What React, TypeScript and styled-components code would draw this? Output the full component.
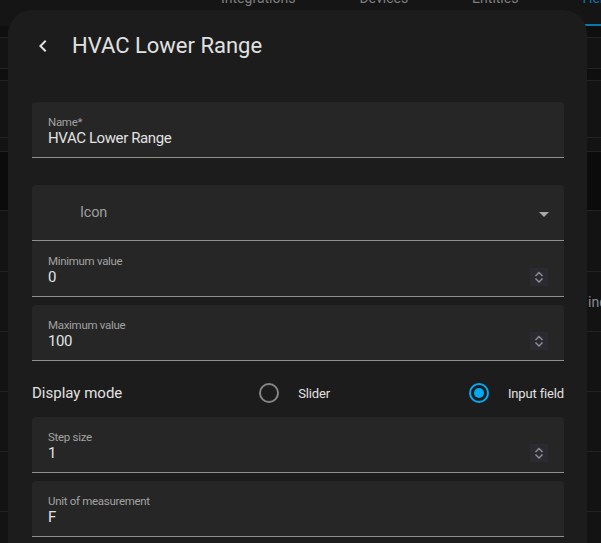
import React from "react";
import styled, { createGlobalStyle } from "styled-components";

const GlobalStyle = createGlobalStyle`
  html, body { margin: 0; padding: 0; background: #121212; }
  body { font-family: Roboto, "Noto Sans", Arial, sans-serif; }
  * { box-sizing: border-box; }
`;

const Page = styled.div`
  position: relative;
  width: 601px;
  height: 543px;
  overflow: hidden;
  background: #121212;
`;

const TabBar = styled.div`
  display: flex;
  align-items: flex-end;
  height: 26px;
  padding-left: 189px;
  background: #151515;
`;

const Tab = styled.div<{ $active?: boolean }>`
  padding: 0 32px 16px;
  font-size: 14px;
  line-height: 20px;
  white-space: nowrap;
  color: ${(p) => (p.$active ? "#0a77ad" : "#7e7e7e")};
  border-bottom: 2px solid ${(p) => (p.$active ? "#0a77ad" : "transparent")};
`;

const BgRow = styled.div<{ $h: number; $tone: "deep" | "dark" | "base" }>`
  display: grid;
  grid-template-columns: 588px 1fr;
  align-items: center;
  height: ${(p) => p.$h}px;
  border-bottom: 1px solid #232323;
  background: ${(p) =>
    p.$tone === "deep" ? "#0b0b0b" : p.$tone === "dark" ? "#0f0f0f" : "#131313"};
`;

const BgCell = styled.span`
  grid-column: 2;
  font-size: 14px;
  color: #8a8a8a;
  white-space: nowrap;
`;

const Dialog = styled.div`
  position: absolute;
  left: 8px;
  top: 10px;
  width: 579px;
  height: 560px;
  background: #1c1c1c;
  border-radius: 24px;
  overflow: hidden;
`;

const Header = styled.header`
  display: flex;
  align-items: center;
  height: 72px;
  padding-left: 23px;
`;

const BackButton = styled.button`
  display: flex;
  width: 24px;
  height: 24px;
  padding: 0;
  margin-right: 17px;
  border: 0;
  background: none;
  color: #e1e1e1;
`;

const Title = styled.h2`
  margin: 0;
  font-size: 22px;
  line-height: 24px;
  font-weight: 400;
  color: #e1e1e1;
`;

const Content = styled.div`
  display: flex;
  flex-direction: column;
  padding: 20px 23px 0 24px;
`;

const Field = styled.div<{ $top?: number; $center?: boolean }>`
  display: flex;
  align-items: ${(p) => (p.$center ? "center" : "flex-start")};
  height: 56px;
  margin-top: ${(p) => p.$top ?? 0}px;
  padding: 0 16px;
  background: #262626;
  border-radius: 4px 4px 0 0;
  border-bottom: 1px solid #8f8f8f;
`;

const FieldText = styled.div`
  display: flex;
  flex-direction: column;
  padding-top: 14px;
`;

const Label = styled.span`
  font-size: 11.5px;
  line-height: 13px;
  letter-spacing: -0.3px;
  color: #a2a2a2;
`;

const Value = styled.span`
  font-size: 15px;
  line-height: 19px;
  letter-spacing: -0.4px;
  color: #e1e1e1;
`;

const Placeholder = styled.span`
  padding-left: 32px;
  font-size: 14.5px;
  letter-spacing: -0.2px;
  color: #9e9e9e;
`;

const ArrowIcon = styled.svg`
  width: 24px;
  height: 24px;
  margin: 3px -8px 0 auto;
  fill: #a8a8a8;
`;

const Spinner = styled.svg`
  width: 18px;
  height: 18px;
  margin: 27px 0 0 auto;
  flex: none;
`;

const ModeRow = styled.div`
  display: flex;
  align-items: center;
  height: 56px;
  padding-top: 8px;
`;

const ModeLabel = styled.span`
  flex: 1;
  font-size: 15px;
  color: #e1e1e1;
`;

const Option = styled.label<{ $gap?: number }>`
  display: flex;
  align-items: center;
  margin-left: ${(p) => p.$gap ?? 0}px;
`;

const Radio = styled.span<{ $checked?: boolean }>`
  display: flex;
  align-items: center;
  justify-content: center;
  width: 20px;
  height: 20px;
  border-radius: 50%;
  border: 2px solid ${(p) => (p.$checked ? "#03a9f4" : "#858585")};
  &::after {
    content: "";
    width: 10px;
    height: 10px;
    border-radius: 50%;
    background: ${(p) => (p.$checked ? "#03a9f4" : "transparent")};
  }
`;

const OptionText = styled.span`
  margin-left: 19px;
  font-size: 13px;
  letter-spacing: -0.15px;
  color: #e1e1e1;
`;

function SpinButton() {
  return (
    <Spinner viewBox="0 0 18 18">
      <rect width="18" height="18" fill="#2b2a31" />
      <path d="M5.5 8 L9 4.5 L12.5 8" stroke="#8e8d95" strokeWidth="1.5" fill="none" />
      <path d="M5.5 10.5 L9 14 L12.5 10.5" stroke="#8e8d95" strokeWidth="1.5" fill="none" />
    </Spinner>
  );
}

function TextField({ label, value, top, spin }: { label: string; value: string; top?: number; spin?: boolean }) {
  return (
    <Field $top={top}>
      <FieldText>
        <Label>{label}</Label>
        <Value>{value}</Value>
      </FieldText>
      {spin && <SpinButton />}
    </Field>
  );
}

const bgRows: { h: number; tone: "deep" | "dark" | "base"; text?: string }[] = [
  { h: 12, tone: "dark" },
  { h: 31, tone: "base" },
  { h: 12, tone: "dark" },
  { h: 57, tone: "base" },
  { h: 14, tone: "base" },
  { h: 59, tone: "deep" },
  { h: 61, tone: "base" },
  { h: 60, tone: "base", text: "indoor" },
  { h: 60, tone: "base" },
  { h: 60, tone: "base" },
  { h: 60, tone: "base" },
  { h: 60, tone: "base" },
];

export default function App() {
  return (
    <Page>
      <GlobalStyle />
      <TabBar>
        <Tab>Integrations</Tab>
        <Tab>Devices</Tab>
        <Tab>Entities</Tab>
        <Tab $active>Helpers</Tab>
      </TabBar>
      {bgRows.map((r, i) => (
        <BgRow key={i} $h={r.h} $tone={r.tone}>
          {r.text && <BgCell>{r.text}</BgCell>}
        </BgRow>
      ))}
      <Dialog>
        <Header>
          <BackButton aria-label="Back">
            <svg viewBox="0 0 24 24" width="24" height="24" fill="currentColor">
              <path d="M15.41,16.58L10.83,12L15.41,7.41L14,6L8,12L14,18L15.41,16.58Z" />
            </svg>
          </BackButton>
          <Title>HVAC Lower Range</Title>
        </Header>
        <Content>
          <TextField label="Name*" value="HVAC Lower Range" />
          <Field $top={27} $center>
            <Placeholder>Icon</Placeholder>
            <ArrowIcon viewBox="0 0 24 24">
              <path d="M7,10L12,15L17,10H7Z" />
            </ArrowIcon>
          </Field>
          <TextField label="Minimum value" value="0" spin />
          <TextField label="Maximum value" value="100" top={8} spin />
          <ModeRow>
            <ModeLabel>Display mode</ModeLabel>
            <Option>
              <Radio />
              <OptionText>Slider</OptionText>
            </Option>
            <Option $gap={139}>
              <Radio $checked />
              <OptionText>Input field</OptionText>
            </Option>
          </ModeRow>
          <TextField label="Step size" value="1" spin />
          <TextField label="Unit of measurement" value="F" top={8} />
        </Content>
      </Dialog>
    </Page>
  );
}
